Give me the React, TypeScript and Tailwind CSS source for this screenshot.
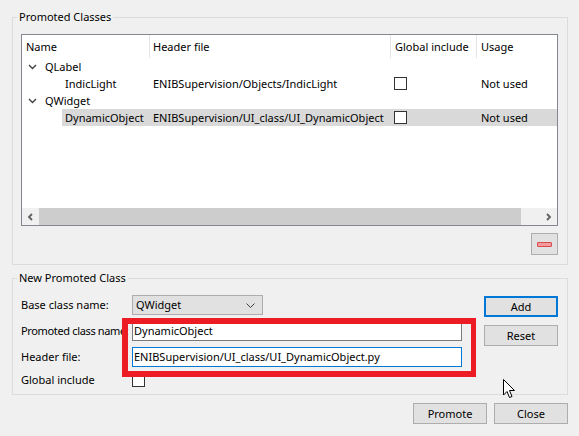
import React from "react";

const Chevron = () => (
  <svg width="9" height="6" viewBox="0 0 9 6">
    <path d="M1 1 L4.5 4.5 L8 1" fill="none" stroke="#404040" strokeWidth="1.4" />
  </svg>
);

const Check = () => (
  <div className="w-[13px] h-[13px] border border-[#333333] bg-white" />
);

function TopRow({ label }: { label: string }) {
  return (
    <div className="flex h-[17px] items-center">
      <div className="w-[20px] flex justify-center">
        <Chevron />
      </div>
      <div className="pl-[3px]">{label}</div>
    </div>
  );
}

function ChildRow({ name, file, selected }: { name: string; file: string; selected?: boolean }) {
  return (
    <div className="flex h-[17px]">
      <div className="w-[40px] shrink-0" />
      <div className={"flex flex-1 items-center " + (selected ? "bg-[#d9d9d9]" : "")}>
        <div className="w-[87px] shrink-0 pl-[3px] whitespace-nowrap overflow-hidden">{name}</div>
        <div className="w-[241px] shrink-0 pl-[4px] whitespace-nowrap overflow-hidden">{file}</div>
        <div className="w-[86px] shrink-0 pl-[4px] flex items-center">
          <Check />
        </div>
        <div className="pl-[5px] whitespace-nowrap">Not used</div>
      </div>
    </div>
  );
}

function Btn({ children, focus, className }: { children: React.ReactNode; focus?: boolean; className?: string }) {
  return (
    <div
      className={
        "w-[74px] h-[21px] flex items-center justify-center bg-[#e1e1e1] " +
        (focus ? "border-2 border-[#0078d7] " : "border border-[#adadad] ") +
        (className || "")
      }
    >
      {children}
    </div>
  );
}

export default function App() {
  return (
    <div className="relative w-[579px] h-[436px] bg-[#f0f0f0] pl-[12px] pr-[11px] text-[11px] leading-[16px] text-black font-['Noto_Sans',sans-serif] overflow-hidden">
      <fieldset className="mt-[9px] border border-[#dcdcdc] pl-[8px] pr-[9px] pb-[9px]">
        <legend className="ml-[-4px] px-[2px] leading-[16px]">Promoted Classes</legend>
        <div className="mt-[9px] h-[192px] border border-[#828790] bg-white flex flex-col">
          <div className="flex h-[23px] shrink-0">
            <div className="w-[127px] pl-[4px] flex items-center">Name</div>
            <div className="w-[241px] pl-[3px] flex items-center border-l border-[#e5e5e5]">Header file</div>
            <div className="w-[86px] pl-[4px] flex items-center border-l border-[#e5e5e5] whitespace-nowrap">Global include</div>
            <div className="flex-1 pl-[4px] flex items-center border-l border-[#e5e5e5]">Usage</div>
          </div>
          <div className="flex-1">
            <TopRow label="QLabel" />
            <ChildRow name="IndicLight" file="ENIBSupervision/Objects/IndicLight" />
            <TopRow label="QWidget" />
            <ChildRow name="DynamicObject" file="ENIBSupervision/UI_class/UI_DynamicObject" selected />
          </div>
          <div className="flex h-[17px] shrink-0 bg-[#f0f0f0]">
            <div className="w-[17px] flex items-center justify-center">
              <svg width="7" height="8" viewBox="0 0 7 8">
                <path d="M5 1 L2 4 L5 7" fill="none" stroke="#606060" strokeWidth="1.8" />
              </svg>
            </div>
            <div className="flex-1 flex">
              <div className="w-[482px] bg-[#cdcdcd]" />
            </div>
            <div className="w-[17px] flex items-center justify-center">
              <svg width="7" height="8" viewBox="0 0 7 8">
                <path d="M2 1 L5 4 L2 7" fill="none" stroke="#606060" strokeWidth="1.8" />
              </svg>
            </div>
          </div>
        </div>
        <div className="mt-[7px] flex justify-end">
          <div className="w-[27px] h-[22px] bg-[#e1e1e1] border border-[#adadad] flex items-center justify-center">
            <div className="w-[15px] h-[5px] rounded-[1px] border border-[#d94a50] bg-[#f59a9c]" />
          </div>
        </div>
      </fieldset>

      <fieldset className="mt-[5px] border border-[#dcdcdc] pl-[8px] pr-[9px] pb-[7px]">
        <legend className="ml-[-4px] px-[2px] leading-[16px]">New Promoted Class</legend>
        <div className="mt-[9px] flex">
          <div className="flex flex-col gap-[6px]">
            <div className="flex h-[20px] items-center">
              <div className="w-[111px] whitespace-nowrap">Base class name:</div>
              <div className="w-[131px] h-[20px] bg-[#e1e1e1] border border-[#adadad] flex items-center pl-[3px] pr-[7px] justify-between">
                <span>QWidget</span>
                <svg width="9" height="5" viewBox="0 0 9 5">
                  <path d="M0.5 0.5 L4.5 4.5 L8.5 0.5" fill="none" stroke="#404040" strokeWidth="1" />
                </svg>
              </div>
            </div>
            <div className="flex h-[20px] items-center">
              <div className="w-[111px] whitespace-nowrap overflow-visible tracking-[-0.35px]">Promoted class name:</div>
              <div className="w-[330px] h-[20px] bg-white border border-[#7a7a7a] flex items-center pl-[1px]">DynamicObject</div>
            </div>
            <div className="flex h-[20px] items-center">
              <div className="w-[111px] whitespace-nowrap">Header file:</div>
              <div className="w-[330px] h-[20px] bg-white border border-[#0078d7] flex items-center pl-[1px]">ENIBSupervision/UI_class/UI_DynamicObject.py</div>
            </div>
            <div className="flex h-[14px] items-center">
              <div className="w-[111px] whitespace-nowrap">Global include</div>
              <Check />
            </div>
          </div>
          <div className="ml-[22px] flex flex-col gap-[8px] pt-[1px]">
            <Btn focus>Add</Btn>
            <Btn>Reset</Btn>
          </div>
        </div>
      </fieldset>

      <div className="mt-[8px] flex justify-end gap-[7px]">
        <Btn>Promote</Btn>
        <Btn>Close</Btn>
      </div>

      <div className="absolute left-[122px] top-[318px] w-[354px] h-[59px] border-[6px] border-r-[5px] border-[#ed1c24]" />

      <svg className="absolute left-[502px] top-[378px]" width="14" height="21" viewBox="0 0 14 21">
        <path d="M1.5 1.5 L1.5 17 L5 13.5 L7.5 19.5 L10 18.5 L7.5 12.5 L12.5 12.5 Z" fill="white" stroke="black" strokeWidth="1" strokeLinejoin="miter" />
      </svg>
    </div>
  );
}
